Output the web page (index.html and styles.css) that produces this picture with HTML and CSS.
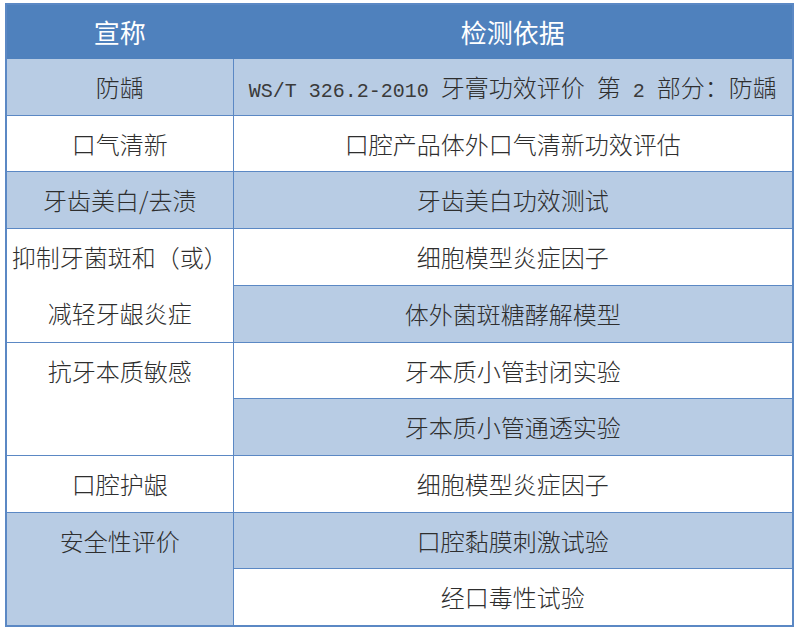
FILE: index.html
```html
<!DOCTYPE html>
<html lang="zh-CN">
<head>
<meta charset="utf-8">
<title>宣称与检测依据</title>
<link rel="stylesheet" href="styles.css">
</head>
<body>
<table class="claims">
  <colgroup><col class="c1"><col class="c2"></colgroup>
  <thead>
    <tr class="head"><th>宣称</th><th>检测依据</th></tr>
  </thead>
  <tbody>
    <tr><td class="blue">防龋</td><td class="blue"><span class="lat">WS/T 326.2-2010 </span>牙膏功效评价<span class="lat"> </span>第<span class="lat"> 2 </span>部分：防龋</td></tr>
    <tr><td>口气清新</td><td>口腔产品体外口气清新功效评估</td></tr>
    <tr><td class="blue">牙齿美白/去渍</td><td class="blue">牙齿美白功效测试</td></tr>
    <tr><td rowspan="2" class="top">抑制牙菌斑和（或）<br>减轻牙龈炎症</td><td>细胞模型炎症因子</td></tr>
    <tr><td class="blue">体外菌斑糖酵解模型</td></tr>
    <tr><td rowspan="2" class="top">抗牙本质敏感</td><td>牙本质小管封闭实验</td></tr>
    <tr><td class="blue">牙本质小管通透实验</td></tr>
    <tr><td>口腔护龈</td><td>细胞模型炎症因子</td></tr>
    <tr><td rowspan="2" class="blue top">安全性评价</td><td class="blue">口腔黏膜刺激试验</td></tr>
    <tr><td>经口毒性试验</td></tr>
  </tbody>
</table>
</body>
</html>
```

FILE: styles.css
```css
html, body {
  margin: 0;
  padding: 0;
  background: #ffffff;
}
body {
  padding: 3px 0 0 5px;
}
.claims {
  border-collapse: collapse;
  table-layout: fixed;
  width: 787px;
  border: 2px solid #5b88c4;
  font-family: "Noto Sans CJK SC", sans-serif;
  color: #2e2e2e;
}
.c1 { width: 227px; }
.c2 { width: 560px; }
.claims th,
.claims td {
  border: 1px solid #5b88c4;
  padding: 0;
  text-align: center;
  white-space: nowrap;
  font-size: 24px;
  font-weight: 300;
  line-height: 55.7px;
  vertical-align: middle;
}
.claims tbody tr {
  height: 56.7px;
}
.head th {
  background: #4f81bd;
  color: #ffffff;
  font-size: 26px;
  font-weight: 400;
  line-height: 53px;
  border-color: #4f81bd;
}
.claims td.blue {
  background: #b8cce4;
}
.claims td.top {
  vertical-align: top;
}
.lat {
  font-family: "Liberation Mono", monospace;
  font-size: 20px;
  line-height: 1;
  color: #3a3a3a;
}
```
